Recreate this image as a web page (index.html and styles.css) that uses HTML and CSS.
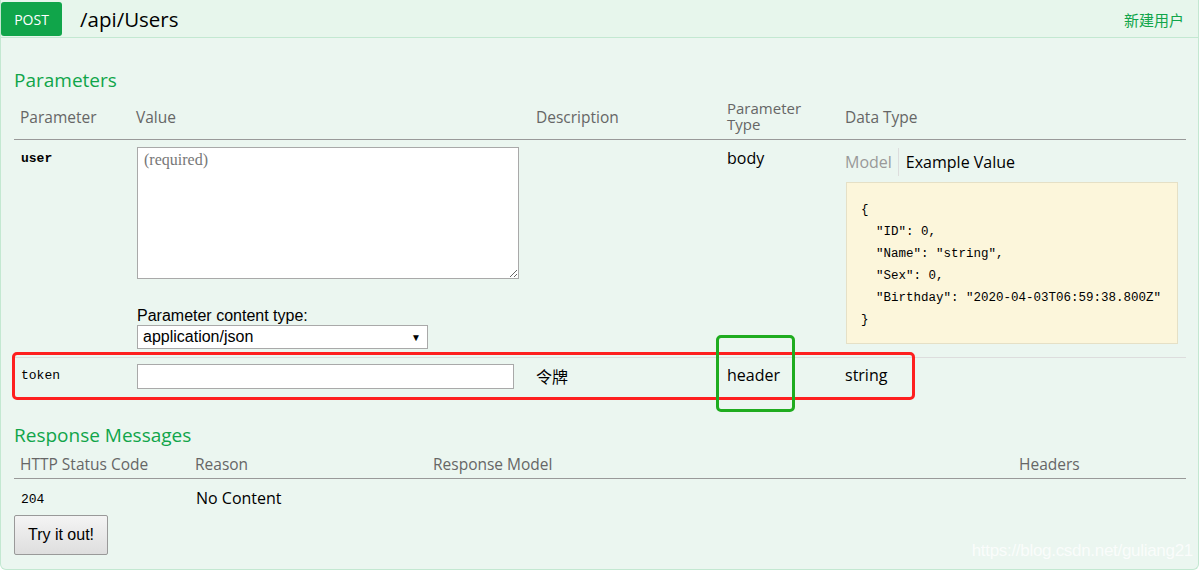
FILE: index.html
```html
<!DOCTYPE html>
<html lang="zh">
<head>
<meta charset="utf-8">
<title>POST /api/Users</title>
<link rel="stylesheet" href="styles.css">
</head>
<body>
<div class="op">
  <div class="heading">
    <span class="method">POST</span>
    <span class="path">/api/Users</span>
    <span class="summary">新建用户</span>
  </div>
  <div class="content">
    <h4 class="sec-title">Parameters</h4>
    <table class="params">
      <colgroup>
        <col class="c1"><col class="c2"><col class="c3"><col class="c4"><col class="c5">
      </colgroup>
      <thead>
        <tr>
          <th>Parameter</th>
          <th>Value</th>
          <th>Description</th>
          <th class="ptype">Parameter<br>Type</th>
          <th>Data Type</th>
        </tr>
      </thead>
      <tbody>
        <tr class="row-user">
          <td class="code bold">user</td>
          <td>
            <textarea class="body-area" placeholder="(required)"></textarea>
            <div class="ctype">
              <label>Parameter content type:</label>
              <span class="select"><span class="sel-text">application/json</span><span class="arrow">▼</span></span>
            </div>
          </td>
          <td></td>
          <td class="plain">body</td>
          <td>
            <div class="tabs"><span class="tab off">Model</span><span class="tab on">Example Value</span></div>
            <pre class="example">{
  "ID": 0,
  "Name": "string",
  "Sex": 0,
  "Birthday": "2020-04-03T06:59:38.800Z"
}</pre>
          </td>
        </tr>
        <tr class="row-token">
          <td class="code">token</td>
          <td><input class="text-in" type="text"></td>
          <td class="plain">令牌</td>
          <td class="plain">header</td>
          <td class="plain">string</td>
        </tr>
      </tbody>
    </table>
    <h4 class="sec-title resp-title">Response Messages</h4>
    <table class="resp">
      <colgroup>
        <col class="r1"><col class="r2"><col class="r3"><col class="r4">
      </colgroup>
      <thead>
        <tr><th>HTTP Status Code</th><th>Reason</th><th>Response Model</th><th>Headers</th></tr>
      </thead>
      <tbody>
        <tr><td class="code">204</td><td class="plain">No Content</td><td></td><td></td></tr>
      </tbody>
    </table>
    <button class="try" type="button">Try it out!</button>
    <div class="watermark">https://blog.csdn.net/guliang21</div>
  </div>
  <div class="mark mark-red"></div>
  <div class="mark mark-green"></div>
</div>
</body>
</html>
```

FILE: styles.css
```css
html, body {
  margin: 0;
  padding: 0;
  background: #ffffff;
}
body {
  font-family: "Open Sans", "Noto Sans CJK SC", sans-serif;
  width: 1200px;
  height: 570px;
  overflow: hidden;
}
.op {
  position: relative;
  width: 1197px;
  border: 1px solid #c3e8d1;
  border-top: none;
  border-radius: 0 0 6px 6px;
  background: #ebf6f0;
}
.heading {
  display: flex;
  align-items: center;
  height: 38px;
  padding-top: 1px;
  background: #e7f6ec;
  border-bottom: 1px solid #c3e8d1;
  box-sizing: border-box;
}
.method {
  display: flex;
  align-items: center;
  justify-content: center;
  width: 61px;
  height: 34px;
  background: #10a54a;
  color: #fff;
  border-radius: 3px;
  font-size: 14px;
  font-family: "Open Sans", sans-serif;
}
.path {
  margin-left: 18px;
  font-size: 20.5px;
  color: #000;
  flex: 1;
}
.summary {
  color: #10a54a;
  font-size: 15px;
  margin-right: 14px;
  font-family: "Noto Sans CJK SC", sans-serif;
}
.content {
  padding: 28px 12px 13px 13px;
  position: relative;
  height: 490px;
  box-sizing: content-box;
}
.sec-title {
  margin: 0;
  font-weight: normal;
  font-size: 19px;
  color: #10a54a;
  line-height: 28px;
}
table {
  border-collapse: collapse;
  table-layout: fixed;
  width: 1172px;
}
.params col.c1 { width: 116px; }
.params col.c2 { width: 400px; }
.params col.c3 { width: 191px; }
.params col.c4 { width: 118px; }
.params col.c5 { width: 347px; }
th {
  text-align: left;
  font-weight: normal;
  color: #666;
  font-size: 15.5px;
  padding: 0 6px 5px 6px;
  border-bottom: 1px solid #999;
  vertical-align: bottom;
  line-height: 20px;
}
.params thead th {
  height: 31px;
  line-height: 16px;
  padding-bottom: 14px;
}
.params thead th.ptype {
  font-size: 15px;
  line-height: 16px;
  padding-bottom: 7px;
}
td {
  vertical-align: top;
  padding: 7px 6px 6px 6px;
  font-size: 16px;
  color: #000;
}
.code {
  font-family: "Liberation Mono", "DejaVu Sans Mono", monospace;
  font-size: 13px;
  padding-left: 7px;
}
.bold { font-weight: bold; }
.row-user td { padding-top: 7px; padding-bottom: 7px; }
.row-user td.code { padding-top: 11px; }
.row-user td.plain { padding-top: 7px; }
.row-user { border-bottom: 1px solid #ddd; }
.body-area {
  display: block;
  width: 382px;
  height: 132px;
  box-sizing: border-box;
  margin: 0 0 0 1px;
  border: 1px solid #a9a9a9;
  background: #fff;
  padding: 3px 6px;
  font-family: "Liberation Mono", monospace;
  font-size: 13.5px;
  resize: both;
}
.body-area::placeholder { color: #777; font-family: "Liberation Serif", serif; font-size: 16px; }
.ctype {
  margin-top: 27px;
  margin-left: 1px;
}
.ctype label {
  display: block;
  font-family: "Liberation Sans", Arial, sans-serif;
  font-size: 16px;
  line-height: 19px;
  color: #000;
}
.select {
  display: flex;
  align-items: center;
  justify-content: space-between;
  width: 291px;
  height: 24px;
  box-sizing: border-box;
  border: 1px solid #a9a9a9;
  background: #fff;
  padding: 0 6px 0 5px;
  font-family: "Liberation Sans", Arial, sans-serif;
  font-size: 16px;
}
.arrow { font-size: 10px; color: #000; }
.tabs {
  display: flex;
  align-items: center;
  height: 30px;
  margin-top: 0;
}
.tab { font-size: 16px; line-height: 28px; }
.tab.off { color: #999; padding-right: 6px; border-right: 1px solid #ddd; }
.tab.on { color: #000; padding-left: 7px; }
.example {
  margin: 5px 0 6px 1px;
  width: 332px;
  box-sizing: border-box;
  background: #fcf6db;
  border: 1px solid #e5e0c6;
  padding: 16px 14px 12px 14px;
  font-family: "Liberation Mono", "DejaVu Sans Mono", monospace;
  font-size: 12.5px;
  line-height: 22px;
  color: #000;
}
.row-token td { padding-top: 7px; padding-bottom: 10px; }
.row-token td.code { padding-top: 10px; }
.row-token td.plain { padding-top: 6px; }
.text-in {
  display: block;
  width: 377px;
  height: 25px;
  box-sizing: border-box;
  border: 1px solid #a9a9a9;
  background: #fff;
  margin: -1px 0 0 1px;
}
.resp-title { margin-top: 22px; }
.resp col.r1 { width: 175px; }
.resp col.r2 { width: 238px; }
.resp col.r3 { width: 586px; }
.resp col.r4 { width: 173px; }
.resp th { padding-bottom: 4px; padding-top: 5px; }
.resp td { padding-top: 8px; padding-bottom: 6px; }
.resp td.code { padding-top: 13px; }
.resp td.plain { padding-left: 7px; }
.try {
  display: block;
  margin: 0;
  width: 94px;
  height: 40px;
  border: 1px solid #999;
  border-radius: 2px;
  background: linear-gradient(#f4f4f4, #dedede);
  font-family: "Liberation Sans", Arial, sans-serif;
  font-size: 16px;
  color: #000;
  padding: 0;
}
.watermark {
  position: absolute;
  right: 5px;
  bottom: 8px;
  font-family: "Liberation Sans", Arial, sans-serif;
  font-size: 17px;
  color: #ffffff;
  opacity: 0.75;
  letter-spacing: -0.3px;
}
.mark {
  position: absolute;
  box-sizing: border-box;
  border-radius: 5px;
}
.mark-red {
  left: 11px;
  top: 352px;
  width: 903px;
  height: 48px;
  border: 3px solid #fe1f1f;
}
.mark-green {
  left: 715px;
  top: 335px;
  width: 79px;
  height: 77px;
  border: 3px solid #1fac1f;
}
```
